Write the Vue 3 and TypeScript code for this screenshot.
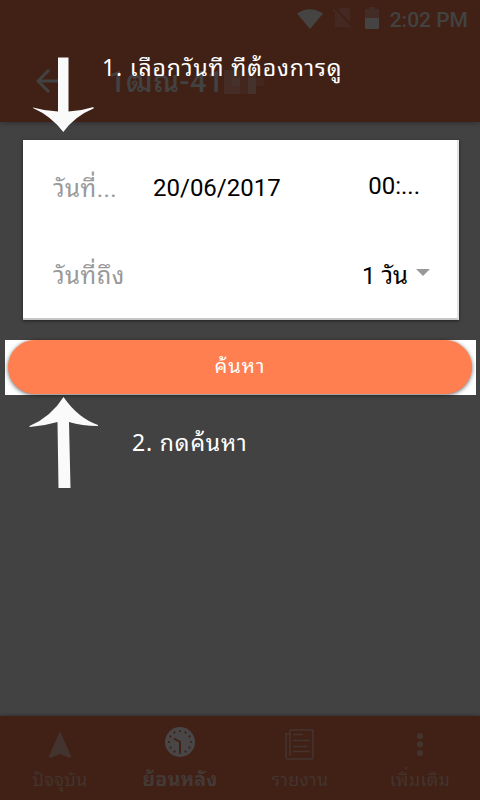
<script setup lang="ts">
import { ref } from 'vue'

interface Tab {
  id: string
  label: string
}

const tabs: Tab[] = [
  { id: 'current', label: 'ปัจจุบัน' },
  { id: 'history', label: 'ย้อนหลัง' },
  { id: 'report', label: 'รายงาน' },
  { id: 'more', label: 'เพิ่มเติม' },
]
const activeTab = ref('history')
const ticks = Array.from({ length: 12 }, (_, i) => i * 30)
</script>

<template>
  <div class="screen">
    <header class="header">
      <div class="status">
        <svg class="wifi" width="26" height="22" viewBox="0 0 26 22"><path d="M0 5.5Q13-3 26 5.5L13 21Z" /></svg>
        <svg class="nosim" width="20" height="22" viewBox="0 0 20 22">
          <path class="sim" d="M7 1H17V20H2V6Z" />
          <path class="gap" d="M1 0 19 19" />
          <path class="slash" d="M0 2 18 21" />
        </svg>
        <svg class="battery" width="14" height="22" viewBox="0 0 14 22">
          <path class="empty" d="M4 0H10V2H14V11H0V2H4Z" />
          <path d="M0 11H14V22H0Z" />
        </svg>
        <span class="clock">2:02 PM</span>
      </div>
      <div class="titlebar">
        <svg class="back" width="25" height="26" viewBox="0 0 25 26"><path d="M25 13H3M13 2 2 13 13 24" /></svg>
        <h1 class="title">1ฒณ-41</h1>
        <svg class="mosaic" width="40" height="24" viewBox="0 0 40 24">
          <path class="m1" d="M0 0H16V24H0ZM24 0H32V24H24Z" />
          <path class="m2" d="M8 8H16V16H8ZM24 8H32V24H24Z" />
          <path class="m3" d="M16 0H24V24H16ZM32 8H40V16H32Z" />
        </svg>
      </div>
    </header>

    <main class="content">
      <section class="card">
        <div class="row">
          <span class="label from">วันที่...</span>
          <span class="date">20/06/2017</span>
          <span class="time">00:...</span>
        </div>
        <div class="row">
          <span class="label to">วันที่ถึง</span>
          <span class="range">1 วัน</span>
          <i class="caret"></i>
        </div>
      </section>
      <div class="search-frame">
        <button class="search" type="button"><span>ค้นหา</span></button>
      </div>
    </main>

    <nav class="tabs">
      <div v-for="tab in tabs" :key="tab.id" class="tab" :class="[tab.id, { active: tab.id === activeTab }]">
        <svg v-if="tab.id === 'current'" class="icon" width="32" height="32" viewBox="0 0 32 32">
          <path class="fill" d="M16 3 27 28 26 30 16 26 6 30 5 28Z" />
        </svg>
        <svg v-else-if="tab.id === 'history'" class="icon" width="32" height="32" viewBox="0 0 32 32">
          <circle class="fill" cx="16" cy="14" r="15" />
          <circle v-for="t in ticks" :key="t" class="dot" cx="16" cy="3" r="1.1" :transform="`rotate(${t} 16 14)`" />
          <path class="hands" d="M10 10.5 16 14V24" />
        </svg>
        <svg v-else-if="tab.id === 'report'" class="icon" width="32" height="32" viewBox="0 0 32 32">
          <path class="line" d="M6 2H29V29Q29 31 27 31H4Q2 31 2 29V6H6M6 2V28M9 6.5H19M9 12.5H26M9 18.5H23M9 23.5H26" />
        </svg>
        <svg v-else class="icon" width="32" height="32" viewBox="0 0 32 32">
          <circle class="fill" cx="16" cy="8" r="3.1" />
          <circle class="fill" cx="16" cy="16.3" r="3.1" />
          <circle class="fill" cx="16" cy="25" r="3.1" />
        </svg>
        <span class="tab-label">{{ tab.label }}</span>
      </div>
    </nav>

    <svg class="arrow down" width="62" height="76" viewBox="0 0 62 76">
      <path d="M25 0.5H35.5V54.5Q48 54 60.5 50V51.5Q42 59 30.3 75Q18 59 0 51V50.5Q12 54 25 54.5Z" />
    </svg>
    <p class="hint first">1. เลือกวันที ทีต้องการดู</p>
    <svg class="arrow up" width="70" height="92" viewBox="0 0 70 92">
      <path d="M34.5 0Q49 21 69 28V29Q53 29 40 25L41.5 91H29.5L28.5 25Q15 29 .5 30V29Q22 20 34.5 0Z" />
    </svg>
    <p class="hint second">2. กดค้นหา</p>
  </div>
</template>

<style>
body {
  margin: 0;
}
</style>

<style scoped>
.screen {
  position: relative;
  display: flex;
  flex-direction: column;
  width: 480px;
  height: 800px;
  overflow: hidden;
  background: #424242;
  font-family: Roboto, "Noto Sans Thai Looped", Loma, Garuda, Waree, "Noto Sans Thai", sans-serif;
}
.header {
  height: 122px;
  flex: none;
  background: #412115;
  color: #424242;
  box-shadow: 0 1px 5px rgba(0, 0, 0, 0.3);
}
.status {
  display: flex;
  height: 36px;
  padding: 0 12px 0 297px;
  align-items: center;
  fill: #464443;
}
.wifi {
  margin-top: 2px;
}
.nosim {
  margin-left: 10px;
}
.sim {
  fill: #432922;
}
.slash,
.gap {
  stroke: #432922;
  stroke-width: 2;
}
.gap {
  stroke: #412115;
}
.battery {
  margin-left: 12px;
}
.empty {
  fill: #432c26;
}
.clock {
  margin-left: auto;
  font-size: 21px;
  line-height: 36px;
  font-weight: 500;
  white-space: nowrap;
  padding-top: 3px;
}
.titlebar {
  display: flex;
  height: 86px;
  padding-left: 36px;
  align-items: center;
}
.back {
  margin-top: 4px;
  fill: none;
  stroke: #424242;
  stroke-width: 3;
}
.title {
  width: 115px;
  margin: 6px 0 0 48px;
  font-size: 29px;
  font-weight: 500;
  line-height: 40px;
  letter-spacing: 0.5px;
  white-space: nowrap;
}
.mosaic {
  margin-top: 6px;
}
.m1 {
  fill: #452c25;
}
.m2 {
  fill: #46322c;
}
.m3 {
  fill: #43261e;
}
.content {
  display: flex;
  flex: 1;
  flex-direction: column;
  padding: 18px 4px 0 5px;
}
.card {
  display: flex;
  box-sizing: border-box;
  height: 180px;
  margin: 0 17px 20px 18px;
  flex-direction: column;
  background: #fff;
  border-right: 2px solid #e3e3e3;
  border-bottom: 2px solid #c4c6c8;
  font-size: 24px;
  box-shadow: 0 1px 3px rgba(0, 0, 0, 0.5);
}
.row {
  display: flex;
  height: 88px;
  padding-left: 30px;
  align-items: center;
  white-space: nowrap;
}
.label {
  color: #999;
  padding-top: 3px;
  letter-spacing: 0.5px;
}
.from {
  width: 100px;
}
.to {
  padding-top: 1px;
}
.date {
  padding-top: 8px;
  color: #000;
}
.time {
  margin-left: auto;
  padding: 4px 37px 0 0;
}
.range {
  margin-left: auto;
  padding-top: 1px;
}
.caret {
  width: 0;
  height: 0;
  margin: 0 27px 0 8px;
  border: 7px solid transparent;
  border-top: 7px solid #999;
  border-bottom: 0;
}
.search-frame {
  display: flex;
  height: 55px;
  padding: 0 4px 0 3px;
  box-sizing: border-box;
  background: #fff;
}
.search {
  flex: 1;
  height: 54px;
  padding: 0;
  border: 0;
  border-radius: 27px;
  background: #ff7f50;
  color: #fff;
  font: 20px/50px Roboto, "Noto Sans Thai Looped", Loma, Garuda, Waree, "Noto Sans Thai", sans-serif;
  letter-spacing: 1px;
  box-shadow: 0 1px 4px rgba(0, 0, 0, 0.6);
}
.search span {
  display: block;
  padding-bottom: 3px;
}
.tabs {
  display: flex;
  height: 84px;
  flex: none;
  background: #412115;
  color: #433430;
  box-shadow: 0 -1px 3px rgba(0, 0, 0, 0.25);
}
.tab {
  display: flex;
  flex: 1;
  flex-direction: column;
  align-items: center;
  padding-top: 12px;
  font-size: 18px;
}
.icon {
  flex: none;
  overflow: visible;
}
.fill {
  fill: currentColor;
}
.history .fill {
  fill: #484646;
}
.dot {
  fill: #412115;
}
.hands,
.line {
  fill: none;
  stroke: #412115;
  stroke-width: 2;
}
.line {
  stroke: currentColor;
  stroke-width: 1.5;
}
.tab-label {
  padding-top: 1px;
  line-height: 38px;
  letter-spacing: 0.3px;
  white-space: nowrap;
}
.active {
  color: #433a38;
  font-weight: 700;
}
.active .tab-label {
  font-size: 19.5px;
}
.arrow {
  position: absolute;
  fill: #fafafa;
}
.down {
  top: 57px;
  left: 33px;
}
.up {
  top: 397px;
  left: 29px;
}
.hint {
  position: absolute;
  margin: 0;
  color: #fff;
  font-family: "Noto Sans", "Noto Sans Thai Looped", Loma, Garuda, Waree, "Noto Sans Thai", sans-serif;
  font-size: 23px;
  line-height: 32px;
  letter-spacing: 0.85px;
  white-space: nowrap;
}
.first {
  top: 51px;
  left: 102px;
}
.second {
  top: 426px;
  left: 132px;
}
</style>
